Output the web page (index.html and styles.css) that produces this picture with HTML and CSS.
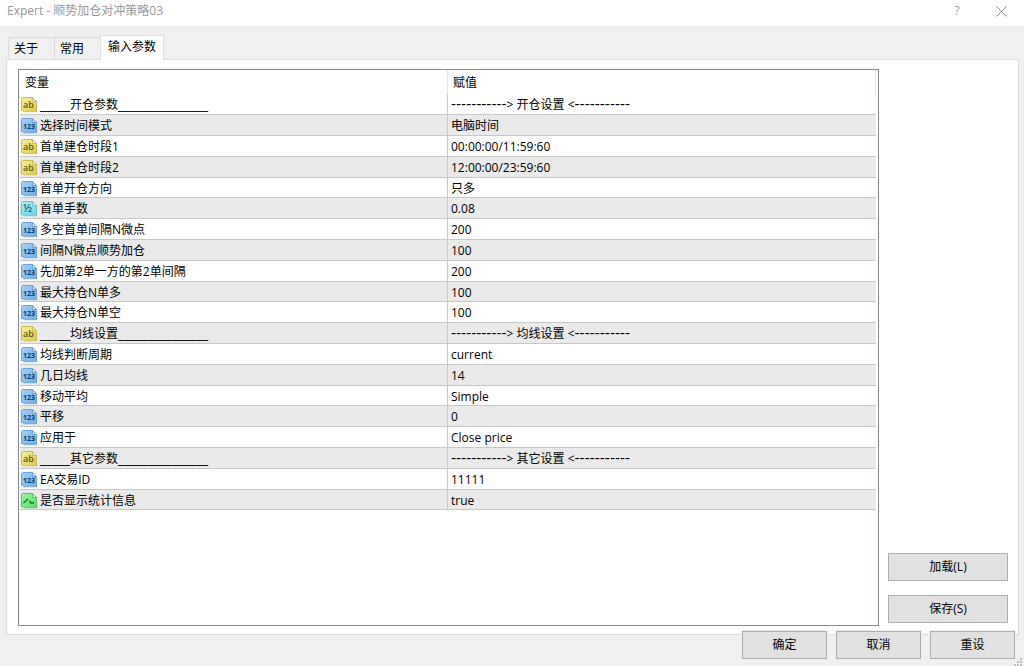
FILE: index.html
```
<!DOCTYPE html>
<html lang="zh-CN">
<head>
    <meta charset="UTF-8">
    <meta name="viewport" content="width=device-width, initial-scale=1.0">
    <title>Expert - 顺势加仓对冲策略03</title>
    <link rel="stylesheet" href="styles.css">
</head>
<body>

    <!-- Icon shapes used by the rows -->
    <svg class="icon-defs" aria-hidden="true">
        <defs>
            <linearGradient id="yellow" x2="1" y2="1"><stop stop-color="#f7f1a0"/><stop offset="1" stop-color="#d9c84e"/></linearGradient>
            <linearGradient id="blue" x2="1" y2="1"><stop stop-color="#a6d2f7"/><stop offset="1" stop-color="#6fabe4"/></linearGradient>
            <linearGradient id="cyan" x2="1" y2="1"><stop stop-color="#a9f0f5"/><stop offset="1" stop-color="#6fd3e2"/></linearGradient>
            <linearGradient id="green" x2="1" y2="1"><stop stop-color="#9df5a2"/><stop offset="1" stop-color="#55dc68"/></linearGradient>
            <path id="sheet" d="M1.5 .5H11.5L15.5 4.5V15L14 13.8L12.5 15.3L11 13.8L9.5 15.3L8 13.8L6.5 15.3L5 13.8L3.5 15.3L2 13.5H.5V1.5Z"/>
            <path id="fold" d="M11.5 .5V4.5H15.5Z"/>
            <symbol id="icon-ab" viewBox="0 0 16 16">
                <use href="#sheet" fill="url(#yellow)" stroke="#cdbb4c"/>
                <use href="#fold" fill="#fbf8cb" stroke="#cdbb4c"/>
                <text class="glyph" x="2" y="11" fill="#63590f">ab</text>
            </symbol>
            <symbol id="icon-123" viewBox="0 0 16 16">
                <use href="#sheet" fill="url(#blue)" stroke="#6ba3da"/>
                <use href="#fold" fill="#d0e8fc" stroke="#6ba3da"/>
                <text class="glyph glyph-number" x="2" y="11" fill="#0b3a66">123</text>
            </symbol>
            <symbol id="icon-half" viewBox="0 0 16 16">
                <use href="#sheet" fill="url(#cyan)" stroke="#60c6d4"/>
                <use href="#fold" fill="#d8fafc" stroke="#60c6d4"/>
                <text class="glyph glyph-half" x="2" y="11" fill="#12697a">½</text>
            </symbol>
            <symbol id="icon-bool" viewBox="0 0 16 16">
                <use href="#sheet" fill="url(#green)" stroke="#4cc95e"/>
                <use href="#fold" fill="#ccfbd0" stroke="#4cc95e"/>
                <path d="M2.5 10L7 6M8.5 8L10 10H13" fill="none" stroke="#0c7a20" stroke-width="1.5"/>
            </symbol>
        </defs>
    </svg>

    <div class="dialog">
        <header class="title-bar">
            <h1 class="title">Expert - 顺势加仓对冲策略03</h1>
            <button class="title-button" type="button" aria-label="帮助">?</button>
            <button class="title-button" type="button" aria-label="关闭">
                <svg width="11" height="11" viewBox="0 0 11 11"><path d="M.5 .5L10.5 10.5M10.5 .5L.5 10.5" stroke="#8c8c8c" fill="none"/></svg>
            </button>
        </header>

        <nav class="tabs" role="tablist">
            <button class="tab" type="button" role="tab">关于</button>
            <button class="tab" type="button" role="tab">常用</button>
            <button class="tab active" type="button" role="tab" aria-selected="true">输入参数</button>
        </nav>

        <main class="panel">
            <div class="list-box">
                <table class="params">
                    <thead>
                        <tr><th>变量</th><th>赋值</th></tr>
                    </thead>
                    <tbody>
                        <tr><td><svg class="icon"><use href="#icon-ab"/></svg><span class="line">_____</span>开仓参数<span class="line">_______________</span></td><td><span class="dashes">-----------</span>&gt; 开仓设置 &lt;<span class="dashes">-----------</span></td></tr>
                        <tr><td><svg class="icon"><use href="#icon-123"/></svg>选择时间模式</td><td>电脑时间</td></tr>
                        <tr><td><svg class="icon"><use href="#icon-ab"/></svg>首单建仓时段1</td><td>00:00:00/11:59:60</td></tr>
                        <tr><td><svg class="icon"><use href="#icon-ab"/></svg>首单建仓时段2</td><td>12:00:00/23:59:60</td></tr>
                        <tr><td><svg class="icon"><use href="#icon-123"/></svg>首单开仓方向</td><td>只多</td></tr>
                        <tr><td><svg class="icon"><use href="#icon-half"/></svg>首单手数</td><td>0.08</td></tr>
                        <tr><td><svg class="icon"><use href="#icon-123"/></svg>多空首单间隔N微点</td><td>200</td></tr>
                        <tr><td><svg class="icon"><use href="#icon-123"/></svg>间隔N微点顺势加仓</td><td>100</td></tr>
                        <tr><td><svg class="icon"><use href="#icon-123"/></svg>先加第2单一方的第2单间隔</td><td>200</td></tr>
                        <tr><td><svg class="icon"><use href="#icon-123"/></svg>最大持仓N单多</td><td>100</td></tr>
                        <tr><td><svg class="icon"><use href="#icon-123"/></svg>最大持仓N单空</td><td>100</td></tr>
                        <tr><td><svg class="icon"><use href="#icon-ab"/></svg><span class="line">_____</span>均线设置<span class="line">_______________</span></td><td><span class="dashes">-----------</span>&gt; 均线设置 &lt;<span class="dashes">-----------</span></td></tr>
                        <tr><td><svg class="icon"><use href="#icon-123"/></svg>均线判断周期</td><td>current</td></tr>
                        <tr><td><svg class="icon"><use href="#icon-123"/></svg>几日均线</td><td>14</td></tr>
                        <tr><td><svg class="icon"><use href="#icon-123"/></svg>移动平均</td><td>Simple</td></tr>
                        <tr><td><svg class="icon"><use href="#icon-123"/></svg>平移</td><td>0</td></tr>
                        <tr><td><svg class="icon"><use href="#icon-123"/></svg>应用于</td><td>Close price</td></tr>
                        <tr><td><svg class="icon"><use href="#icon-ab"/></svg><span class="line">_____</span>其它参数<span class="line">_______________</span></td><td><span class="dashes">-----------</span>&gt; 其它设置 &lt;<span class="dashes">-----------</span></td></tr>
                        <tr><td><svg class="icon"><use href="#icon-123"/></svg>EA交易ID</td><td>11111</td></tr>
                        <tr><td><svg class="icon"><use href="#icon-bool"/></svg>是否显示统计信息</td><td>true</td></tr>
                    </tbody>
                </table>
            </div>
            <div class="side-buttons">
                <button class="button" type="button">加载(L)</button>
                <button class="button" type="button">保存(S)</button>
            </div>
        </main>

        <footer class="footer">
            <button class="button" type="button">确定</button>
            <button class="button" type="button">取消</button>
            <button class="button" type="button">重设</button>
        </footer>

        <!-- Resize grip -->
        <svg class="grip" width="8" height="8" viewBox="0 0 8 8" aria-hidden="true">
            <path d="M6 0h2v2h-2zM3 3h2v2h-2zM6 3h2v2h-2zM0 6h2v2h-2zM3 6h2v2h-2zM6 6h2v2h-2z" fill="#bfbfbf"/>
        </svg>
    </div>

</body>
</html>
```
FILE: styles.css
```
* {
    box-sizing: border-box;
}

body {
    margin: 0;
    font-family: "Open Sans", "Noto Sans CJK SC", sans-serif;
    font-size: 12px;
    line-height: 18px;
    color: #000;
    background: #f0f0f0;
}

button {
    font: inherit;
    color: inherit;
}

.icon-defs {
    position: absolute;
    width: 0;
    height: 0;
}

.dialog {
    position: relative;
    display: flex;
    flex-direction: column;
    min-height: 100vh;
    padding-bottom: 7px;
}

/* Title bar */
.title-bar {
    display: flex;
    align-items: center;
    height: 26px;
    padding: 0 1px 4px 7px;
    background: #fff;
    color: #999;
}

.title {
    flex: 1;
    margin: 0;
    font-size: 12px;
    font-weight: 400;
}

.title-button {
    display: flex;
    align-items: center;
    justify-content: center;
    width: 44px;
    height: 20px;
    padding: 0;
    border: 0;
    background: none;
}

/* Tabs */
.tabs {
    display: flex;
    align-items: flex-end;
    height: 34px;
    padding-left: 8px;
    margin-bottom: -1px;
    z-index: 1;
}

.tab {
    height: 23px;
    padding: 0 16px 0 5px;
    border: 1px solid #dcdcdc;
    border-right: 0;
    background: #f0f0f0;
}

.tab.active {
    height: 25px;
    padding: 0 7px 2px;
    border-right: 1px solid #dcdcdc;
    border-bottom: 0;
    background: #fff;
}

/* Main panel */
.panel {
    flex: 1;
    display: flex;
    gap: 9px;
    margin: 0 5px 0 6px;
    padding: 9px 10px 8px 11px;
    border: 1px solid #dcdcdc;
    background: #fff;
}

.list-box {
    flex: 1;
    padding: 0 2px 0 1px;
    border: 1px solid #828790;
}

.params {
    width: 100%;
    table-layout: fixed;
    border-collapse: separate;
    border-spacing: 0;
}

.params th {
    height: 24px;
    padding: 2px 5px 0;
    border-right: 1px solid #e5e5e5;
    font-weight: 400;
    text-align: left;
}

.params td {
    height: 21px;
    padding: 2px 3px 0;
    border-bottom: 1px solid #c8c8c8;
    line-height: 16px;
    white-space: nowrap;
}

.params tr:nth-child(5n) td {
    height: 20px;
}

.params td:first-child {
    padding-left: 1px;
    border-right: 1px solid #c8c8c8;
}

.params tbody tr:nth-child(even) {
    background: #eaeaea;
}

.icon {
    width: 16px;
    height: 16px;
    margin-right: 3px;
    vertical-align: -4px;
}

.glyph {
    font: 600 9px "Open Sans", sans-serif;
}

.glyph-number {
    font-size: 7px;
    font-weight: 700;
}

.glyph-half {
    font-size: 11px;
}

.line {
    font-family: "DejaVu Sans", sans-serif;
}

.dashes {
    font-family: "DejaVu Sans", sans-serif;
    font-size: 14px;
    line-height: 12px;
}

/* Buttons */
.button {
    height: 28px;
    padding: 0;
    border: 1px solid #adadad;
    background: #e1e1e1;
}

.side-buttons {
    display: flex;
    flex-direction: column;
    justify-content: flex-end;
    gap: 14px;
    width: 120px;
    padding-bottom: 3px;
}

.footer {
    display: flex;
    justify-content: flex-end;
    gap: 9px;
    margin-top: -4px;
    padding-right: 9px;
}

.footer .button {
    width: 85px;
    box-shadow: 0 0 0 1px #f0f0f0;
}

.grip {
    position: absolute;
    right: 2px;
    bottom: 0;
}
```
